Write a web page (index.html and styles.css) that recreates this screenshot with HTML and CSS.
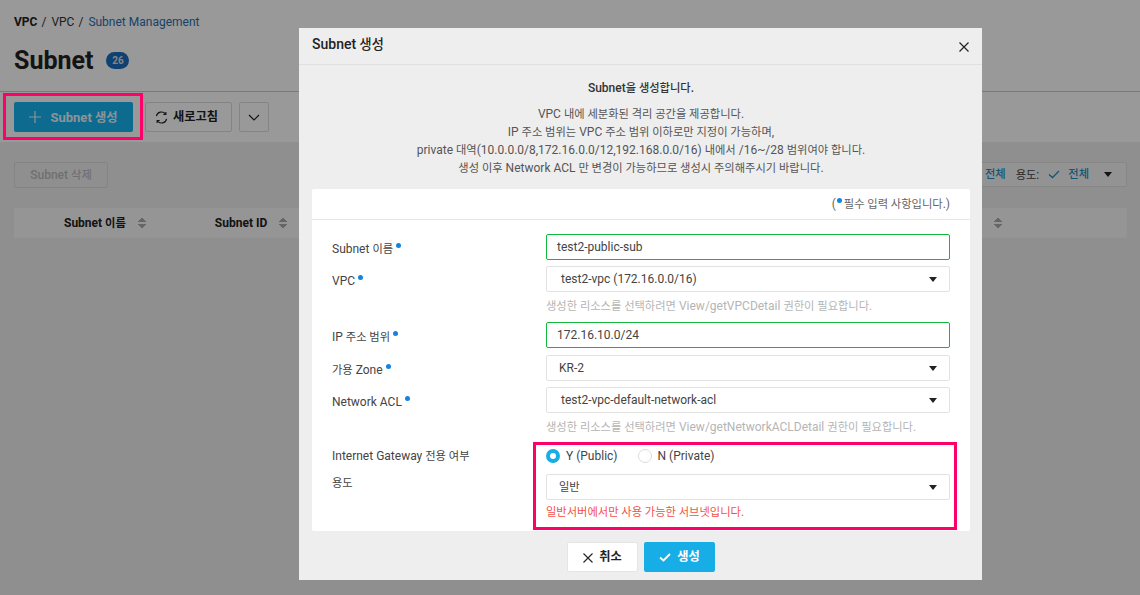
FILE: index.html
```html
<!DOCTYPE html>
<html lang="ko">
<head>
    <meta charset="UTF-8">
    <meta name="viewport" content="width=device-width, initial-scale=1.0">
    <title>Subnet Management</title>
    <link rel="stylesheet" href="styles.css">
</head>
<body>

<div class="page">
    <div class="page-head">
        <div class="breadcrumb">
            <b>VPC</b><span class="sep">/</span><span>VPC</span><span class="sep">/</span><a class="crumb-link">Subnet Management</a>
        </div>
        <div class="title-row">
            <h1>Subnet</h1>
            <span class="count">26</span>
        </div>
        <div class="toolbar">
            <button class="btn btn-primary">
                <svg width="12" height="12" viewBox="0 0 12 12"><path d="M6 0v12M0 6h12" stroke="currentColor" stroke-width="1.2" fill="none"/></svg>
                <span>Subnet <span class="ko">생성</span></span>
            </button>
            <button class="btn btn-refresh">
                <svg width="13" height="13" viewBox="0 0 13 13"><path d="M1.4 5.2A5.2 5.2 0 0 1 10.6 3M11.6 7.8A5.2 5.2 0 0 1 2.4 10M10.9 .9v2.6H8.3M2.1 12.1V9.5h2.6" stroke="currentColor" stroke-width="1.1" fill="none"/></svg>
                <span class="ko">새로고침</span>
            </button>
            <button class="btn btn-more">
                <svg width="12" height="7" viewBox="0 0 12 7"><path d="M1 1l5 5 5-5" stroke="currentColor" stroke-width="1.2" fill="none"/></svg>
            </button>
        </div>
    </div>
    <div class="content">
        <div class="filter-row">
            <button class="btn-delete">Subnet <span class="ko">삭제</span></button>
            <div class="filter-box">
                <span class="filter-value ko">전체</span>
                <span class="filter-label"><span class="ko">용도</span>:</span>
                <svg class="filter-check" width="12" height="9" viewBox="0 0 12 9"><path d="M1 4.5l3.5 3L11 1" stroke="currentColor" stroke-width="1.3" fill="none"/></svg>
                <span class="filter-value ko">전체</span>
                <span class="caret filter-caret"></span>
            </div>
        </div>
        <div class="table-head">
            <div class="th th-name"><span>Subnet <span class="ko">이름</span></span><span class="sort"></span></div>
            <div class="th th-id">Subnet ID<span class="sort"></span></div>
            <div class="th th-last"><span class="sort"></span></div>
        </div>
    </div>
</div>

<div class="overlay"></div>

<div class="modal">
    <div class="modal-head">
        <span class="modal-title">Subnet <span class="ko">생성</span></span>
        <svg class="modal-close" width="10" height="10" viewBox="0 0 10 10"><path d="M.5.5l9 9M9.5.5l-9 9" stroke="#222" stroke-width="1.2" fill="none"/></svg>
    </div>
    <div class="modal-body">
        <div class="intro">
            <strong>Subnet<span class="ko">을 생성합니다</span>.</strong>
            <p>VPC <span class="ko">내에 세분화된 격리 공간을 제공합니다</span>.<br>
            IP <span class="ko">주소 범위는</span> VPC <span class="ko">주소 범위 이하로만 지정이 가능하며</span>,<br>
            private <span class="ko">대역</span>(10.0.0.0/8,172.16.0.0/12,192.168.0.0/16) <span class="ko">내에서</span> /16~/28 <span class="ko">범위여야 합니다</span>.<br>
            <span class="ko">생성 이후</span> Network ACL <span class="ko">만 변경이 가능하므로 생성시 주의해주시기 바랍니다</span>.</p>
        </div>
        <div class="panel">
            <div class="required-note">(<i class="dot"></i><span class="ko">필수 입력 사항입니다</span>.)</div>
            <div class="form">
                <div class="row">
                    <label>Subnet <span class="ko">이름</span><i class="dot"></i></label>
                    <div class="field input-ok">test2-public-sub</div>
                </div>
                <div class="row">
                    <label>VPC<i class="dot"></i></label>
                    <div class="field select select-wide">test2-vpc (172.16.0.0/16)<span class="caret"></span></div>
                </div>
                <div class="hint hint-first"><span class="ko">생성한 리소스를 선택하려면</span> View/getVPCDetail <span class="ko">권한이 필요합니다</span>.</div>
                <div class="row row-ip">
                    <label>IP <span class="ko">주소 범위</span><i class="dot"></i></label>
                    <div class="field input-ok">172.16.10.0/24</div>
                </div>
                <div class="row">
                    <label><span class="ko">가용</span> Zone<i class="dot"></i></label>
                    <div class="field select">KR-2<span class="caret"></span></div>
                </div>
                <div class="row">
                    <label>Network ACL<i class="dot"></i></label>
                    <div class="field select select-wide">test2-vpc-default-network-acl<span class="caret"></span></div>
                </div>
                <div class="hint hint-second"><span class="ko">생성한 리소스를 선택하려면</span> View/getNetworkACLDetail <span class="ko">권한이 필요합니다</span>.</div>
                <div class="row row-radio">
                    <label>Internet Gateway <span class="ko">전용 여부</span></label>
                    <div class="radios">
                        <span class="radio radio-on"></span><span class="radio-text">Y (Public)</span>
                        <span class="radio"></span><span class="radio-text">N (Private)</span>
                    </div>
                </div>
                <div class="row row-usage">
                    <label class="ko">용도</label>
                    <div class="field select"><span class="ko select-ko">일반</span><span class="caret"></span></div>
                </div>
                <div class="error"><span class="ko">일반서버에서만 사용 가능한 서브넷입니다</span>.</div>
            </div>
        </div>
        <div class="modal-foot">
            <button class="btn-foot btn-cancel">
                <svg width="10" height="10" viewBox="0 0 10 10"><path d="M.5.5l9 9M9.5.5l-9 9" stroke="currentColor" stroke-width="1.1" fill="none"/></svg>
                <span class="ko">취소</span>
            </button>
            <button class="btn-foot btn-ok">
                <svg width="12" height="9" viewBox="0 0 12 9"><path d="M1 4.5l3.5 3L11 1" stroke="currentColor" stroke-width="1.8" fill="none"/></svg>
                <span class="ko">생성</span>
            </button>
        </div>
    </div>
</div>

<div class="mark mark-create"></div>
<div class="mark mark-options"></div>

</body>
</html>
```

FILE: styles.css
```css
* {
    box-sizing: border-box;
}
html, body {
    margin: 0;
    padding: 0;
    height: 100%;
    overflow: hidden;
}
body {
    font-family: Roboto, "Noto Sans CJK KR", sans-serif;
    font-size: 12px;
    color: #333;
    background-color: #eee;
}
button {
    font-family: inherit;
}
/* korean runs sit a little smaller than the latin text */
.ko {
    font-size: 0.94em;
    line-height: 1;
}

/* page behind the modal */
.page-head {
    background-color: #fff;
    height: 142px;
    padding: 14px 0 0 14px;
}
.breadcrumb {
    height: 16px;
    line-height: 16px;
    font-size: 12px;
    color: #333;
}
.breadcrumb b {
    font-weight: 700;
    color: #222;
}
.sep {
    margin: 0 5px 0 4px;
}
.crumb-link {
    color: #2a6fb0;
}
.title-row {
    display: flex;
    align-items: center;
    margin-top: 15px;
    height: 30px;
}
h1 {
    margin: 0;
    font-size: 25px;
    font-weight: 700;
    color: #222;
}
.count {
    margin-left: 13px;
    width: 23px;
    height: 17px;
    border-radius: 9px;
    background-color: #1a6fc0;
    color: #ddd;
    font-size: 10px;
    font-weight: 700;
    line-height: 17px;
    text-align: center;
}
.toolbar {
    display: flex;
    gap: 7px;
    margin-top: 16px;
    margin-left: -14px;
    padding: 10px 0 0 14px;
    border-top: 1px solid #ccc;
}
.btn {
    display: flex;
    align-items: center;
    justify-content: center;
    height: 30px;
    border-radius: 2px;
    border: 1px solid #ddd;
    background-color: #fff;
    color: #222;
    font-size: 13px;
    font-weight: 700;
    padding: 0;
}
.btn-primary {
    width: 119px;
    gap: 9px;
    margin-right: 5px;
    border: none;
    background-color: #15b2ee;
    color: #eaf6fc;
}
.btn-refresh {
    width: 87px;
    gap: 5px;
    padding: 1px 4px 0 0;
}
.btn-more {
    width: 30px;
}
.content {
    padding: 20px 13px 0 14px;
}
.filter-row {
    display: flex;
    justify-content: space-between;
    height: 26px;
}
.btn-delete {
    width: 94px;
    height: 26px;
    border: 1px solid #ddd;
    border-radius: 2px;
    background-color: #eee;
    color: #bbb;
    font-size: 12px;
    font-weight: 500;
    padding: 0;
}
.filter-box {
    display: flex;
    align-items: center;
    width: 300px;
    height: 25px;
    justify-content: flex-end;
    padding-right: 14px;
    background-color: #f6f6f6;
    border: 1px solid #e2e2e2;
    border-radius: 2px;
}
.filter-value {
    color: #1f8fc6;
    font-weight: 500;
}
.filter-label {
    margin: 0 9px 0 10px;
    color: #444;
}
.filter-check {
    color: #1f8fc6;
    margin-right: 8px;
}
.filter-caret {
    margin-left: 15px;
}
.caret {
    display: inline-block;
    width: 0;
    height: 0;
    border-left: 4px solid transparent;
    border-right: 4px solid transparent;
    border-top: 5px solid #222;
}
.table-head {
    display: flex;
    align-items: center;
    height: 30px;
    margin-top: 20px;
    background-color: #f8f8f8;
    border-radius: 2px;
    font-weight: 700;
    color: #222;
}
.th {
    display: flex;
    align-items: center;
    gap: 12px;
}
.th-name {
    margin-left: 50px;
}
.th-id {
    margin-left: 69px;
}
.th-last {
    margin-left: auto;
    margin-right: 125px;
}
.sort {
    width: 8px;
    height: 12px;
    background:
        linear-gradient(to bottom right, transparent 50%, #aaa 50%) left top / 4px 5px no-repeat,
        linear-gradient(to bottom left, transparent 50%, #aaa 50%) right top / 4px 5px no-repeat,
        linear-gradient(to top right, transparent 50%, #aaa 50%) left bottom / 4px 5px no-repeat,
        linear-gradient(to top left, transparent 50%, #aaa 50%) right bottom / 4px 5px no-repeat;
}

.overlay {
    position: fixed;
    inset: 0;
    background-color: rgba(0, 0, 0, 0.4);
}

/* modal */
.modal {
    position: absolute;
    left: 299px;
    top: 28px;
    width: 683px;
    height: 552px;
    background-color: #eee;
}
.modal-head {
    display: flex;
    align-items: center;
    justify-content: space-between;
    height: 37px;
    padding: 0 13px;
    border-bottom: 1px solid #e0e0e0;
}
.modal-title {
    font-size: 14px;
    font-weight: 500;
    color: #222;
    position: relative;
    top: -2px;
}
.modal-close {
    position: relative;
    top: 1px;
}
.modal-body {
    padding: 0 12px 0 13px;
}
.intro {
    height: 124px;
    padding-top: 14px;
    text-align: center;
    color: #555;
    line-height: 18px;
}
.intro strong {
    display: block;
    font-weight: 500;
    color: #333;
}
.intro p {
    margin: 8px 0 0;
}
.panel {
    height: 342px;
    background-color: #fff;
    border-radius: 2px;
}
.required-note {
    height: 31px;
    line-height: 31px;
    padding-right: 20px;
    text-align: right;
    color: #666;
    border-bottom: 1px solid #e6e6e6;
}
.required-note .dot {
    margin: 0 2px 0 1px;
}
.dot {
    display: inline-block;
    width: 5px;
    height: 5px;
    margin-left: 3px;
    border-radius: 50%;
    background-color: #1583e0;
    vertical-align: 5px;
}
.form {
    padding: 14px 20px 0 20px;
}
.row {
    display: flex;
    align-items: center;
    height: 26px;
    margin-bottom: 6px;
}
.row label {
    width: 214px;
    color: #444;
    position: relative;
    top: 2px;
}
.field {
    flex: 1;
    height: 26px;
    border: 1px solid #e2e2e2;
    border-radius: 2px;
    padding: 0 10px;
    line-height: 24px;
    color: #444;
    background-color: #fff;
}
.input-ok {
    border-color: #13b83c;
}
.select {
    display: flex;
    align-items: center;
    justify-content: space-between;
    padding: 0 12px 0 12px;
}
.select-wide {
    padding-left: 14px;
}
.select-ko {
    padding-top: 1px;
}
.hint {
    margin-left: 214px;
    height: 18px;
    line-height: 18px;
    color: #b5b5b5;
}
.hint-first {
    margin-top: -1px;
    margin-bottom: 7px;
}
.row-ip {
    margin-bottom: 7px;
}
.hint-second {
    margin-top: -1px;
    margin-bottom: 11px;
}
.row-radio {
    height: 18px;
    margin-bottom: 9px;
}
.row-radio label {
    top: 0;
}
.radios {
    display: flex;
    align-items: center;
}
.radio {
    width: 14px;
    height: 14px;
    border-radius: 50%;
    border: 1px solid #ddd;
    background-color: #fff;
}
.radio-on {
    border: 4px solid #17aee8;
}
.radio-text {
    margin: 0 20px 0 6px;
    color: #444;
}
.row-usage {
    margin-bottom: 3px;
    align-items: flex-start;
}
.row-usage label {
    top: 4px;
}
.error {
    margin-left: 214px;
    height: 18px;
    line-height: 18px;
    color: #f4504a;
}
.modal-foot {
    display: flex;
    justify-content: center;
    gap: 6px;
    padding: 11px 0 0 0;
}
.btn-foot {
    display: flex;
    align-items: center;
    justify-content: center;
    gap: 6px;
    width: 71px;
    height: 30px;
    border-radius: 2px;
    font-size: 13px;
    font-weight: 700;
    padding: 1px 0 0;
}
.btn-cancel {
    border: 1px solid #e4e4e4;
    background-color: #fff;
    color: #222;
}
.btn-ok {
    border: none;
    background-color: #17aee8;
    color: #fff;
}

/* pink highlight boxes drawn on top of the screenshot */
.mark {
    position: absolute;
    border: 3px solid #ff0068;
}
.mark-create {
    left: 3px;
    top: 93px;
    width: 140px;
    height: 47px;
}
.mark-options {
    left: 533px;
    top: 442px;
    width: 424px;
    height: 88px;
}
```
